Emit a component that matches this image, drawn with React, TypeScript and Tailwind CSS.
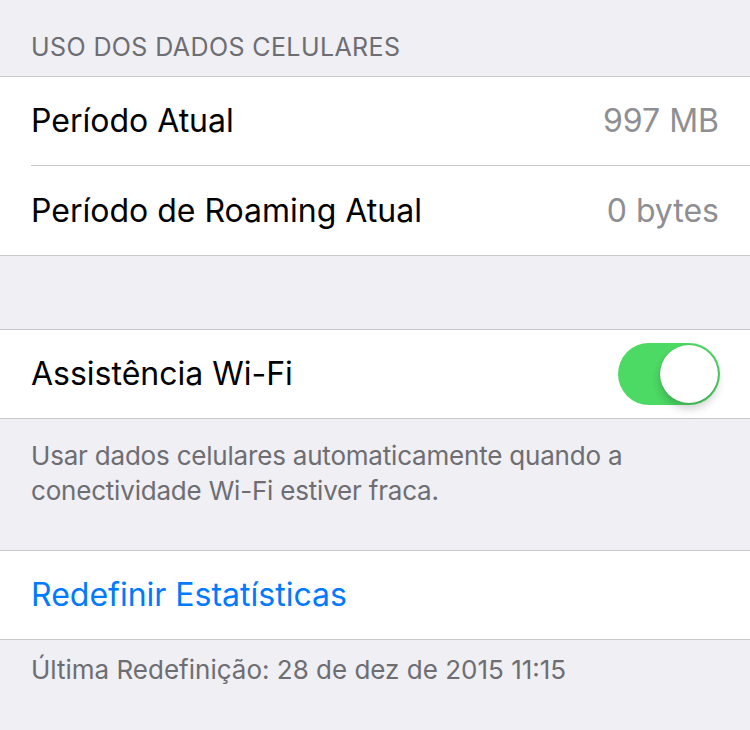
import React from "react";

const font = { fontFamily: "Inter, 'Noto Sans', sans-serif" };

const Toggle = ({ on }: { on: boolean }) => (
  <div
    className={`relative h-[62px] w-[102px] rounded-full ${
      on ? "bg-[#4cd964]" : "bg-white border-2 border-[#e5e5ea]"
    }`}
  >
    <div
      className={`absolute top-[2px] h-[58px] w-[58px] rounded-full bg-white shadow-[0_6px_8px_rgba(0,0,0,0.18),0_0_1px_rgba(0,0,0,0.3)] ${
        on ? "right-[2px]" : "left-[2px]"
      }`}
    />
  </div>
);

const Row = ({
  label,
  value,
  last,
  children,
}: {
  label: string;
  value?: string;
  last?: boolean;
  children?: React.ReactNode;
}) => (
  <div className="pl-[31px]">
    <div
      className={`flex h-[89px] items-center justify-between pr-[31px] ${
        last ? "" : "border-b border-[#c8c7cc]"
      }`}
    >
      <span className="text-[32px] text-black">{label}</span>
      {value && <span className="text-[32px] text-[#8e8e93]">{value}</span>}
      {children}
    </div>
  </div>
);

export default function App() {
  return (
    <div className="h-[730px] w-[750px] overflow-hidden bg-[#efeff4]" style={font}>
      <div className="px-[31px] pt-[35px] pb-[16px] text-[25px] leading-none tracking-[0.4px] text-[#6d6d72]">
        USO DOS DADOS CELULARES
      </div>

      <div className="border-y border-[#c8c7cc] bg-white">
        <Row label="Período Atual" value="997 MB" />
        <Row label="Período de Roaming Atual" value="0 bytes" last />
      </div>

      <div className="h-[73px]" />

      <div className="border-y border-[#c8c7cc] bg-white">
        <div className="flex h-[88px] items-center justify-between pl-[31px] pr-[30px]">
          <span className="text-[32px] text-black">Assistência Wi-Fi</span>
          <Toggle on />
        </div>
      </div>

      <p className="px-[31px] pt-[19px] pb-[42px] text-[26px] leading-[35px] tracking-[-0.2px] text-[#6d6d72]">
        Usar dados celulares automaticamente quando a
        <br />
        conectividade Wi-Fi estiver fraca.
      </p>

      <div className="border-y border-[#c8c7cc] bg-white">
        <div className="flex h-[88px] items-center pl-[31px]">
          <span className="text-[32px] text-[#007aff]">Redefinir Estatísticas</span>
        </div>
      </div>

      <p className="px-[31px] pt-[12px] text-[26px] leading-[35px] text-[#6d6d72]">
        Última Redefinição: 28 de dez de 2015 11:15
      </p>
    </div>
  );
}
